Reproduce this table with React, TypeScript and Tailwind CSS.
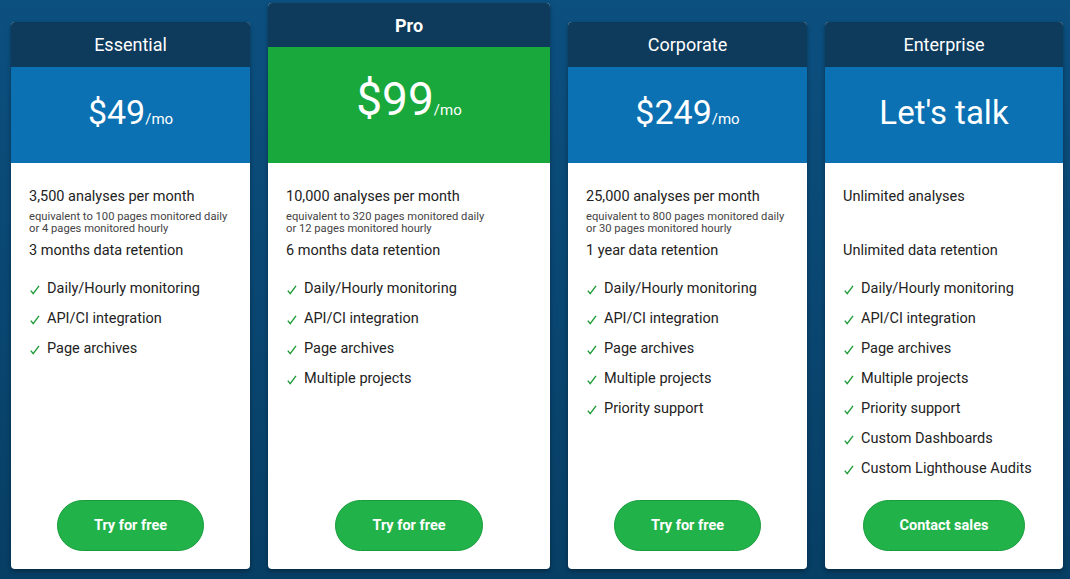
import React from "react";

type Plan = {
  name: string;
  price?: string;
  talk?: boolean;
  pro?: boolean;
  analyses: string;
  eq?: [string, string];
  retention: string;
  features: string[];
  cta: string;
};

const plans: Plan[] = [
  {
    name: "Essential",
    price: "$49",
    analyses: "3,500 analyses per month",
    eq: ["equivalent to 100 pages monitored daily", "or 4 pages monitored hourly"],
    retention: "3 months data retention",
    features: ["Daily/Hourly monitoring", "API/CI integration", "Page archives"],
    cta: "Try for free",
  },
  {
    name: "Pro",
    price: "$99",
    pro: true,
    analyses: "10,000 analyses per month",
    eq: ["equivalent to 320 pages monitored daily", "or 12 pages monitored hourly"],
    retention: "6 months data retention",
    features: ["Daily/Hourly monitoring", "API/CI integration", "Page archives", "Multiple projects"],
    cta: "Try for free",
  },
  {
    name: "Corporate",
    price: "$249",
    analyses: "25,000 analyses per month",
    eq: ["equivalent to 800 pages monitored daily", "or 30 pages monitored hourly"],
    retention: "1 year data retention",
    features: [
      "Daily/Hourly monitoring",
      "API/CI integration",
      "Page archives",
      "Multiple projects",
      "Priority support",
    ],
    cta: "Try for free",
  },
  {
    name: "Enterprise",
    talk: true,
    analyses: "Unlimited analyses",
    retention: "Unlimited data retention",
    features: [
      "Daily/Hourly monitoring",
      "API/CI integration",
      "Page archives",
      "Multiple projects",
      "Priority support",
      "Custom Dashboards",
      "Custom Lighthouse Audits",
    ],
    cta: "Contact sales",
  },
];

function Card({ p, w }: { p: Plan; w: string }) {
  return (
    <div
      className={`${w} ${p.pro ? "h-[566px]" : "h-[547px]"} flex flex-col bg-white rounded-[4px] overflow-hidden shadow-[0_2px_4px_rgba(0,0,0,0.35)]`}
    >
      <div
        className={`${p.pro ? "h-[44px] font-bold" : "h-[45px]"} bg-[#0e3a5c] text-white text-[18px] flex items-center justify-center`}
      >
        {p.name}
      </div>
      <div
        className={`${p.pro ? "h-[116px] bg-[#18a83c] pb-[12px]" : "h-[96px] bg-[#0b71b3] pb-[6px]"} text-white flex items-center justify-center`}
      >
        {p.talk ? (
          <span className="text-[33px] leading-none">Let's talk</span>
        ) : (
          <span className="flex items-baseline">
            <span className={`${p.pro ? "text-[46px]" : "text-[34px]"} leading-none`}>{p.price}</span>
            <span className="text-[15px] leading-none">/mo</span>
          </span>
        )}
      </div>
      <div className="flex-1 flex flex-col px-[18px] pt-[24px] text-[#222]">
        <p className="text-[14.5px] leading-[20px]">{p.analyses}</p>
        <div className="mt-[4px] h-[24px] text-[11.2px] leading-[12px] text-[#444]">
          {p.eq && (
            <>
              <div>{p.eq[0]}</div>
              <div>{p.eq[1]}</div>
            </>
          )}
        </div>
        <p className="mt-[6px] text-[14.5px] leading-[20px]">{p.retention}</p>
        <ul className="mt-[13px]">
          {p.features.map((f) => (
            <li key={f} className="flex items-center h-[30px] text-[14.5px]">
              <svg width="10" height="10" viewBox="0 0 10 10" className="ml-[1px] mr-[7px] shrink-0 mt-[2px]">
                <path d="M0.8 5.6 L3.2 8.6 L9 0.8" fill="none" stroke="#1e9a36" strokeWidth="1.4" />
              </svg>
              <span>{f}</span>
            </li>
          ))}
        </ul>
        <div className="mt-auto mb-[18px] flex justify-center">
          <button className="h-[51px] px-[36px] rounded-full bg-[#22b24a] border border-[#169c3a] text-white font-bold text-[14.5px]">
            {p.cta}
          </button>
        </div>
      </div>
    </div>
  );
}

export default function App() {
  const widths = ["w-[239px]", "w-[282px]", "w-[239px]", "w-[238px]"];
  return (
    <div
      className="w-[1070px] h-[579px] bg-gradient-to-b from-[#0c5080] to-[#073e64] flex items-end gap-[18px] pl-[11px] pb-[10px]"
      style={{ fontFamily: "Roboto, 'Liberation Sans', sans-serif" }}
    >
      {plans.map((p, i) => (
        <Card key={p.name} p={p} w={widths[i]} />
      ))}
    </div>
  );
}
